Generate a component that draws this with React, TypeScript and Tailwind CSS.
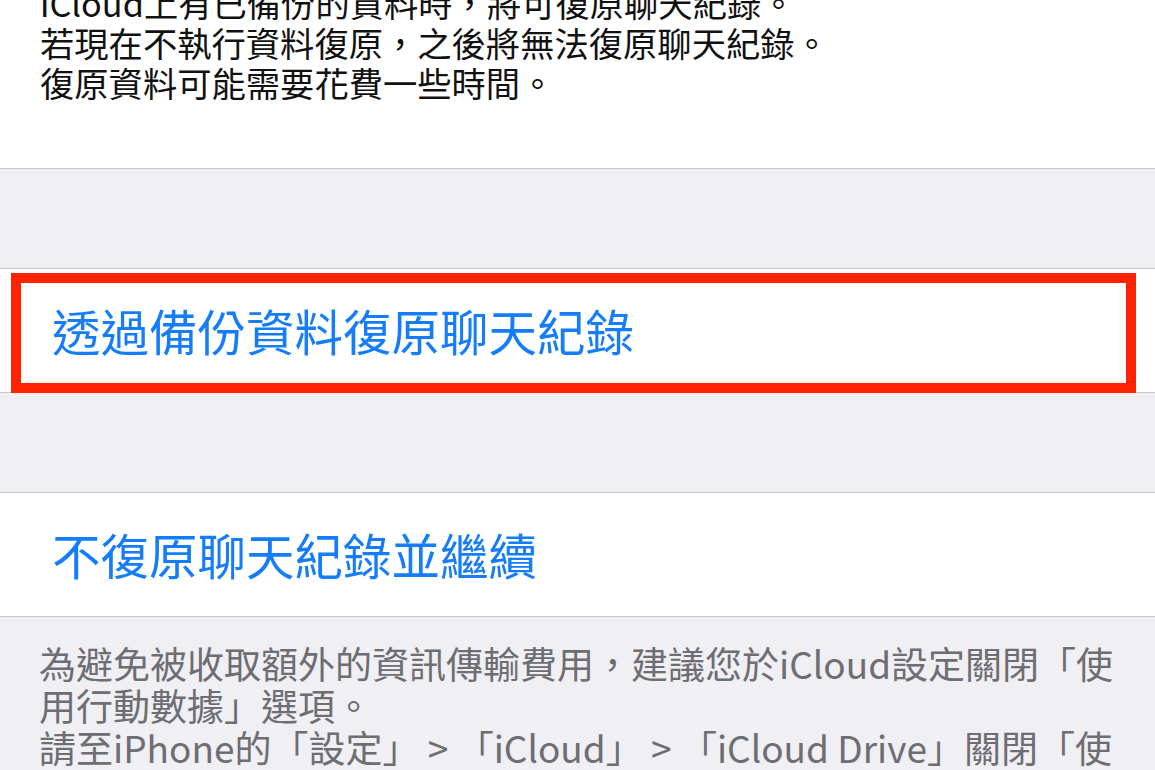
import React from 'react';

const font = { fontFamily: '"Noto Sans CJK TC", "Noto Sans", sans-serif' };

const ActionRow: React.FC<{ label: string; highlighted?: boolean }> = ({ label, highlighted }) => (
  <div className="relative h-[125px] bg-white border-y border-[#c8c7cc] flex items-center pl-[52px]">
    <span className="text-[48.5px] leading-none text-[#167dfa] whitespace-nowrap">{label}</span>
    {highlighted && (
      <div className="absolute left-[11px] right-[19px] top-[4px] bottom-[-1px] border-[10px] border-[#ff2200]" />
    )}
  </div>
);

export default function App() {
  return (
    <div className="w-[1155px] h-[770px] overflow-hidden bg-[#efeff4]" style={font}>
      {/* 說明文字 */}
      <div className="h-[169px] bg-white border-b border-[#c8c7cc] overflow-hidden">
        <div className="-mt-[18px] pl-[40px] text-[34.3px] leading-[40px] text-[#111] whitespace-nowrap">
          <p>iCloud上有已備份的資料時，將可復原聊天紀錄。</p>
          <p>若現在不執行資料復原，之後將無法復原聊天紀錄。</p>
          <p>復原資料可能需要花費一些時間。</p>
        </div>
      </div>

      <div className="h-[99px]" />
      <ActionRow label="透過備份資料復原聊天紀錄" highlighted />

      <div className="h-[99px]" />
      <ActionRow label="不復原聊天紀錄並繼續" />

      {/* 頁尾說明 */}
      <div className="pt-[25px] pl-[39px] text-[37px] leading-[42px] text-[#6d6d72] whitespace-nowrap">
        <p>為避免被收取額外的資訊傳輸費用，建議您於iCloud設定關閉「使</p>
        <p>用行動數據」選項。</p>
        <p>請至iPhone的「設定」 &gt; 「iCloud」 &gt; 「iCloud Drive」關閉「使</p>
      </div>
    </div>
  );
}
